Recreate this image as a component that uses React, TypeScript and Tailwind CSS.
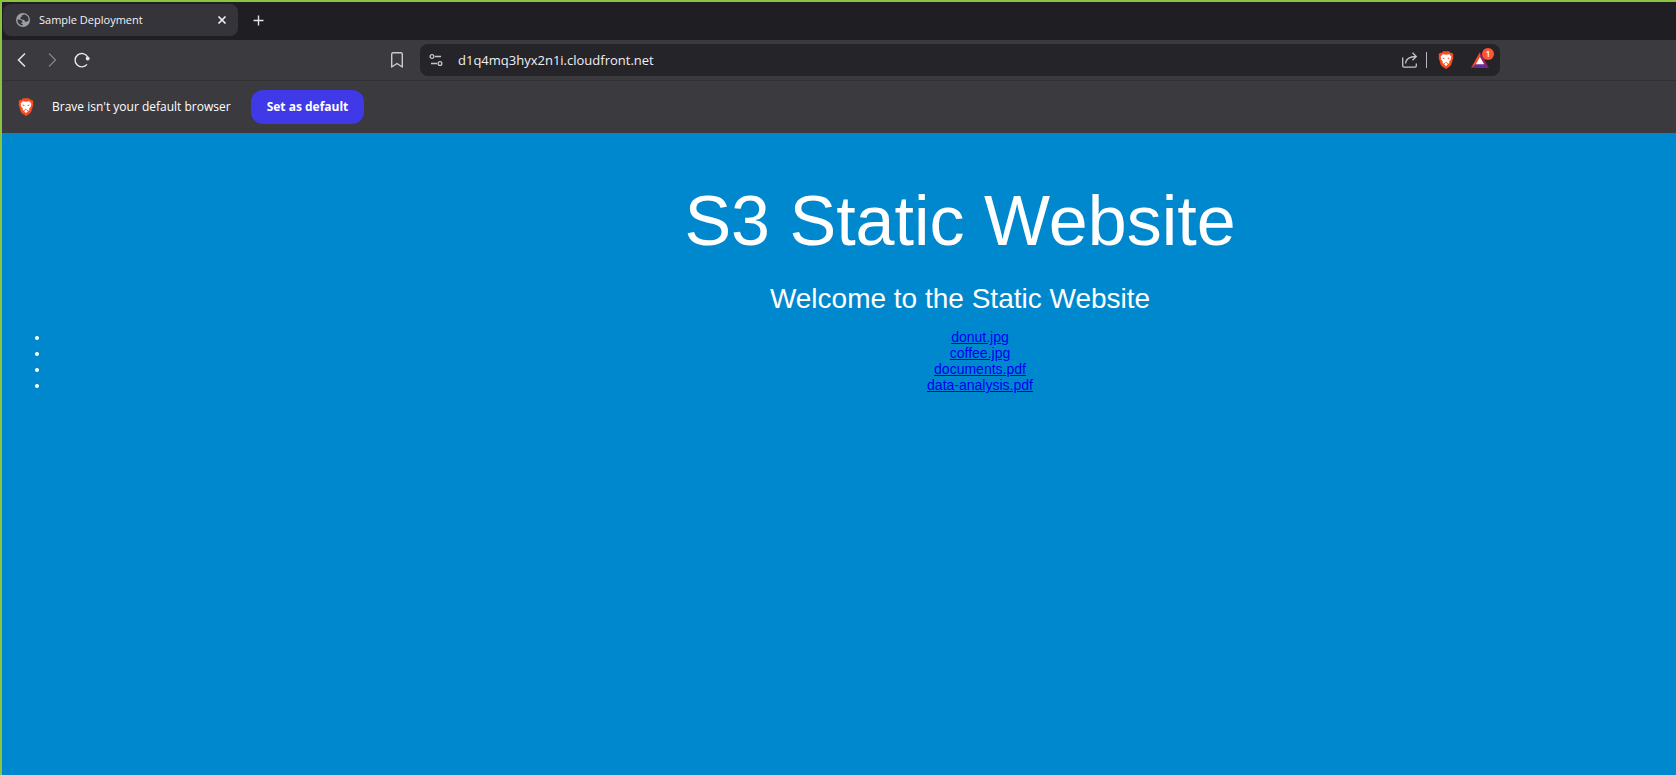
import React from "react";

const files = ["donut.jpg", "coffee.jpg", "documents.pdf", "data-analysis.pdf"];

function BraveLion() {
  return (
    <svg width="16" height="18" viewBox="0 0 16 18" aria-hidden="true">
      <path d="M5 .3h6l1.5 1.6 1.5-.2 1.500 2-.5 1.400.4 1.300-2.200 7.300-1.400 1.700L8 17.900l-3.800-2.500-1.400-1.700L.6 6.400 1 5.100.5 3.700l1.500-2 1.500.2z" fill="#fb4c20" />
      <path d="M4.600 3.200 8 3.700l3.400-.5 2 2.600-.5 1.500.3.8-2.100 2.700.3 1.100-.7.9-1.500-.8-.3.700 1 .7L8 15.100l-1.900-1.700 1-.7-.3-.7-1.500.8-.7-.9.3-1.100L2.800 8.100l.3-.8-.5-1.500z" fill="#fff" />
      <path d="M4.200 6.500l2.300.6-.3.900-1.200-.2zM11.800 6.500l-2.300.6.3.9 1.200-.2zM6.600 11.300 8 10.900l1.400.4L8 12.100z" fill="#fb4c20" />
    </svg>
  );
}

function Globe() {
  return (
    <svg width="16" height="16" viewBox="0 0 16 16" aria-hidden="true">
      <circle cx="8" cy="8" r="7" fill="#9a9ea5" />
      <path d="M9.600 2.600c-1.600.2-2.800.8-2.800 1.700 0 .8-1.500.9-1.500 2s1.200 1.400 2.500 1.400c1.500 0 1.900.6 2.100 1.500.2.800 1.200.7 1.900.3.500-.4 1.100-.6 1.600-.5A5.600 5.600 0 0 0 9.600 2.600zM2.400 7.600c1.800 0 3.700.4 4.700 1.300.8.800.6 1.400-.3 1.700-.9.300-.9 1-.1 1.200.9.200 1.200.8 1.100 1.700A5.600 5.600 0 0 1 2.400 7.600z" fill="#35343a" />
    </svg>
  );
}

function TabStrip() {
  return (
    <div className="flex h-[38px] items-center bg-[#1f1e23] pb-0.5 pl-px">
      <div className="flex h-8 w-[235px] items-center rounded-lg bg-[#35343a] pl-3 pr-2">
        <Globe />
        <span className="ml-2 flex-1 text-[11px] leading-4 text-[#f3f2f6]">Sample Deployment</span>
        <button type="button" aria-label="Close tab" className="flex size-4 items-center justify-center text-[#f0eff3]">
          <svg width="16" height="16" viewBox="0 0 16 16" fill="none" stroke="currentColor" strokeWidth="1.7">
            <path d="m4.500 4.500 7 7m0-7-7 7" />
          </svg>
        </button>
      </div>
      <button type="button" aria-label="New tab" className="ml-3 flex size-4 items-center justify-center text-[#e2e1e6]">
        <svg width="16" height="16" viewBox="0 0 16 16" fill="none" stroke="currentColor" strokeWidth="1.4">
          <path d="M8.500 3.500v10m-5-5h10" />
        </svg>
      </button>
    </div>
  );
}

function Toolbar() {
  return (
    <div className="flex h-10 items-center bg-[#3b3a3f]">
      <div className="flex flex-1 items-center gap-[14px] text-[#e8e7eb]">
        <button type="button" aria-label="Back" className="ml-3">
          <svg width="16" height="16" viewBox="0 0 16 16" fill="none" stroke="currentColor" strokeWidth="1.5">
            <path d="m11 1.500-6.500 6.500 6.500 6.500" />
          </svg>
        </button>
        <button type="button" aria-label="Forward" className="text-[#838287]">
          <svg width="16" height="16" viewBox="0 0 16 16" fill="none" stroke="currentColor" strokeWidth="1.3">
            <path d="m5 1.500 6.500 6.500-6.500 6.500" />
          </svg>
        </button>
        <button type="button" aria-label="Reload">
          <svg width="16" height="16" viewBox="0 0 16 16" fill="none" stroke="currentColor" strokeWidth="1.4">
            <path d="M13 12.400A6.700 6.700 0 1 1 13.600 4.800" />
            <circle cx="13.700" cy="6.500" r="1.900" fill="currentColor" stroke="none" />
          </svg>
        </button>
        <button type="button" aria-label="Bookmark this page" className="ml-auto mr-[15px] text-[#cbcacf]">
          <svg width="16" height="16" viewBox="0 0 16 16" fill="none" stroke="currentColor" strokeWidth="1.4">
            <path d="M2.700 15V2.200c0-.9.500-1.400 1.400-1.400h7.800c.9 0 1.400.5 1.400 1.400V15L8 11.500z" strokeLinejoin="round" />
          </svg>
        </button>
      </div>
      <div className="flex h-8 w-[1080px] items-center rounded-lg bg-[#252429] px-2 text-[#c6c5ca]">
        <button type="button" aria-label="View site information">
          <svg width="16" height="16" viewBox="0 0 16 16" fill="none" stroke="currentColor" strokeWidth="1.3">
            <circle cx="4" cy="4.500" r="1.900" />
            <path d="M7 4.500h6M3 11.500h6" />
            <circle cx="12" cy="11.500" r="1.900" />
          </svg>
        </button>
        <input
          type="text"
          aria-label="Address"
          defaultValue="d1q4mq3hyx2n1i.cloudfront.net"
          className="ml-[14px] min-w-0 flex-1 bg-transparent text-[13px] leading-5 text-[#f0eff3] outline-none"
        />
        <button type="button" aria-label="Share">
          <svg width="18" height="18" viewBox="0 0 18 18" fill="none" stroke="currentColor" strokeWidth="1.3">
            <path d="M1.700 6.500v8.300c0 .8.500 1.300 1.300 1.300h11c.8 0 1.300-.5 1.300-1.300v-2.300M4.500 12.500C5 8 8.500 5.500 15 5.500M11.500 1.800 15.300 5.500l-3.800 3.700" />
          </svg>
        </button>
        <span className="ml-[7px] h-4 w-px bg-[#b9b8bd]" />
        <button type="button" aria-label="Brave Shields" className="ml-[11px]">
          <BraveLion />
        </button>
        <button type="button" aria-label="Brave Rewards" className="relative ml-[17px] mr-[3px]">
          <svg width="18" height="16" viewBox="0 0 18 16" aria-hidden="true">
            <path d="M9 0 0 16l9-5.300z" fill="#ff4724" />
            <path d="M9 0v6l3 5.500L18 16z" fill="#9e1f63" />
            <path d="M0 16h18l-5-4H5z" fill="#662d91" />
            <path d="M9 5 4.800 12.200h8.400z" fill="#fff" />
          </svg>
          <span className="absolute -right-[5px] -top-1 flex size-3 items-center justify-center rounded-full bg-[#ff5530] text-[8px] font-semibold leading-3 text-white">
            1
          </span>
        </button>
      </div>
      <div className="flex-1" />
    </div>
  );
}

function DefaultBrowserBar() {
  return (
    <div className="flex h-[53px] items-center border-t border-[#323136] bg-[#3b3a3f] pl-4">
      <BraveLion />
      <span className="ml-[18px] text-[12px] leading-5 text-white">Brave isn't your default browser</span>
      <button type="button" className="ml-5 h-[34px] rounded-xl bg-[#4039e8] px-4 text-[12px] font-bold leading-5 text-white">
        Set as default
      </button>
    </div>
  );
}

export default function App() {
  return (
    <div className="flex min-h-screen flex-col overflow-hidden border-l-2 border-t-2 border-[#8bc53f] bg-[#0088ce] font-['Open_Sans',sans-serif]">
      <div className="w-[calc(100%+242px)]">
        <TabStrip />
        <Toolbar />
        <DefaultBrowserBar />
        <main className="px-2 pt-12 text-center font-['Liberation_Sans',sans-serif] text-[14px] leading-4 text-white">
          <h1 className="text-[70px] leading-[80px]">S3 Static Website</h1>
          <h2 className="mt-[22px] text-[28px] leading-8">Welcome to the Static Website</h2>
          <ul className="mt-[14px] list-disc pl-10">
            {files.map((file) => (
              <li key={file}>
                <a href={`#${file}`} className="text-[#0000ee] underline">
                  {file}
                </a>
              </li>
            ))}
          </ul>
        </main>
      </div>
    </div>
  );
}
